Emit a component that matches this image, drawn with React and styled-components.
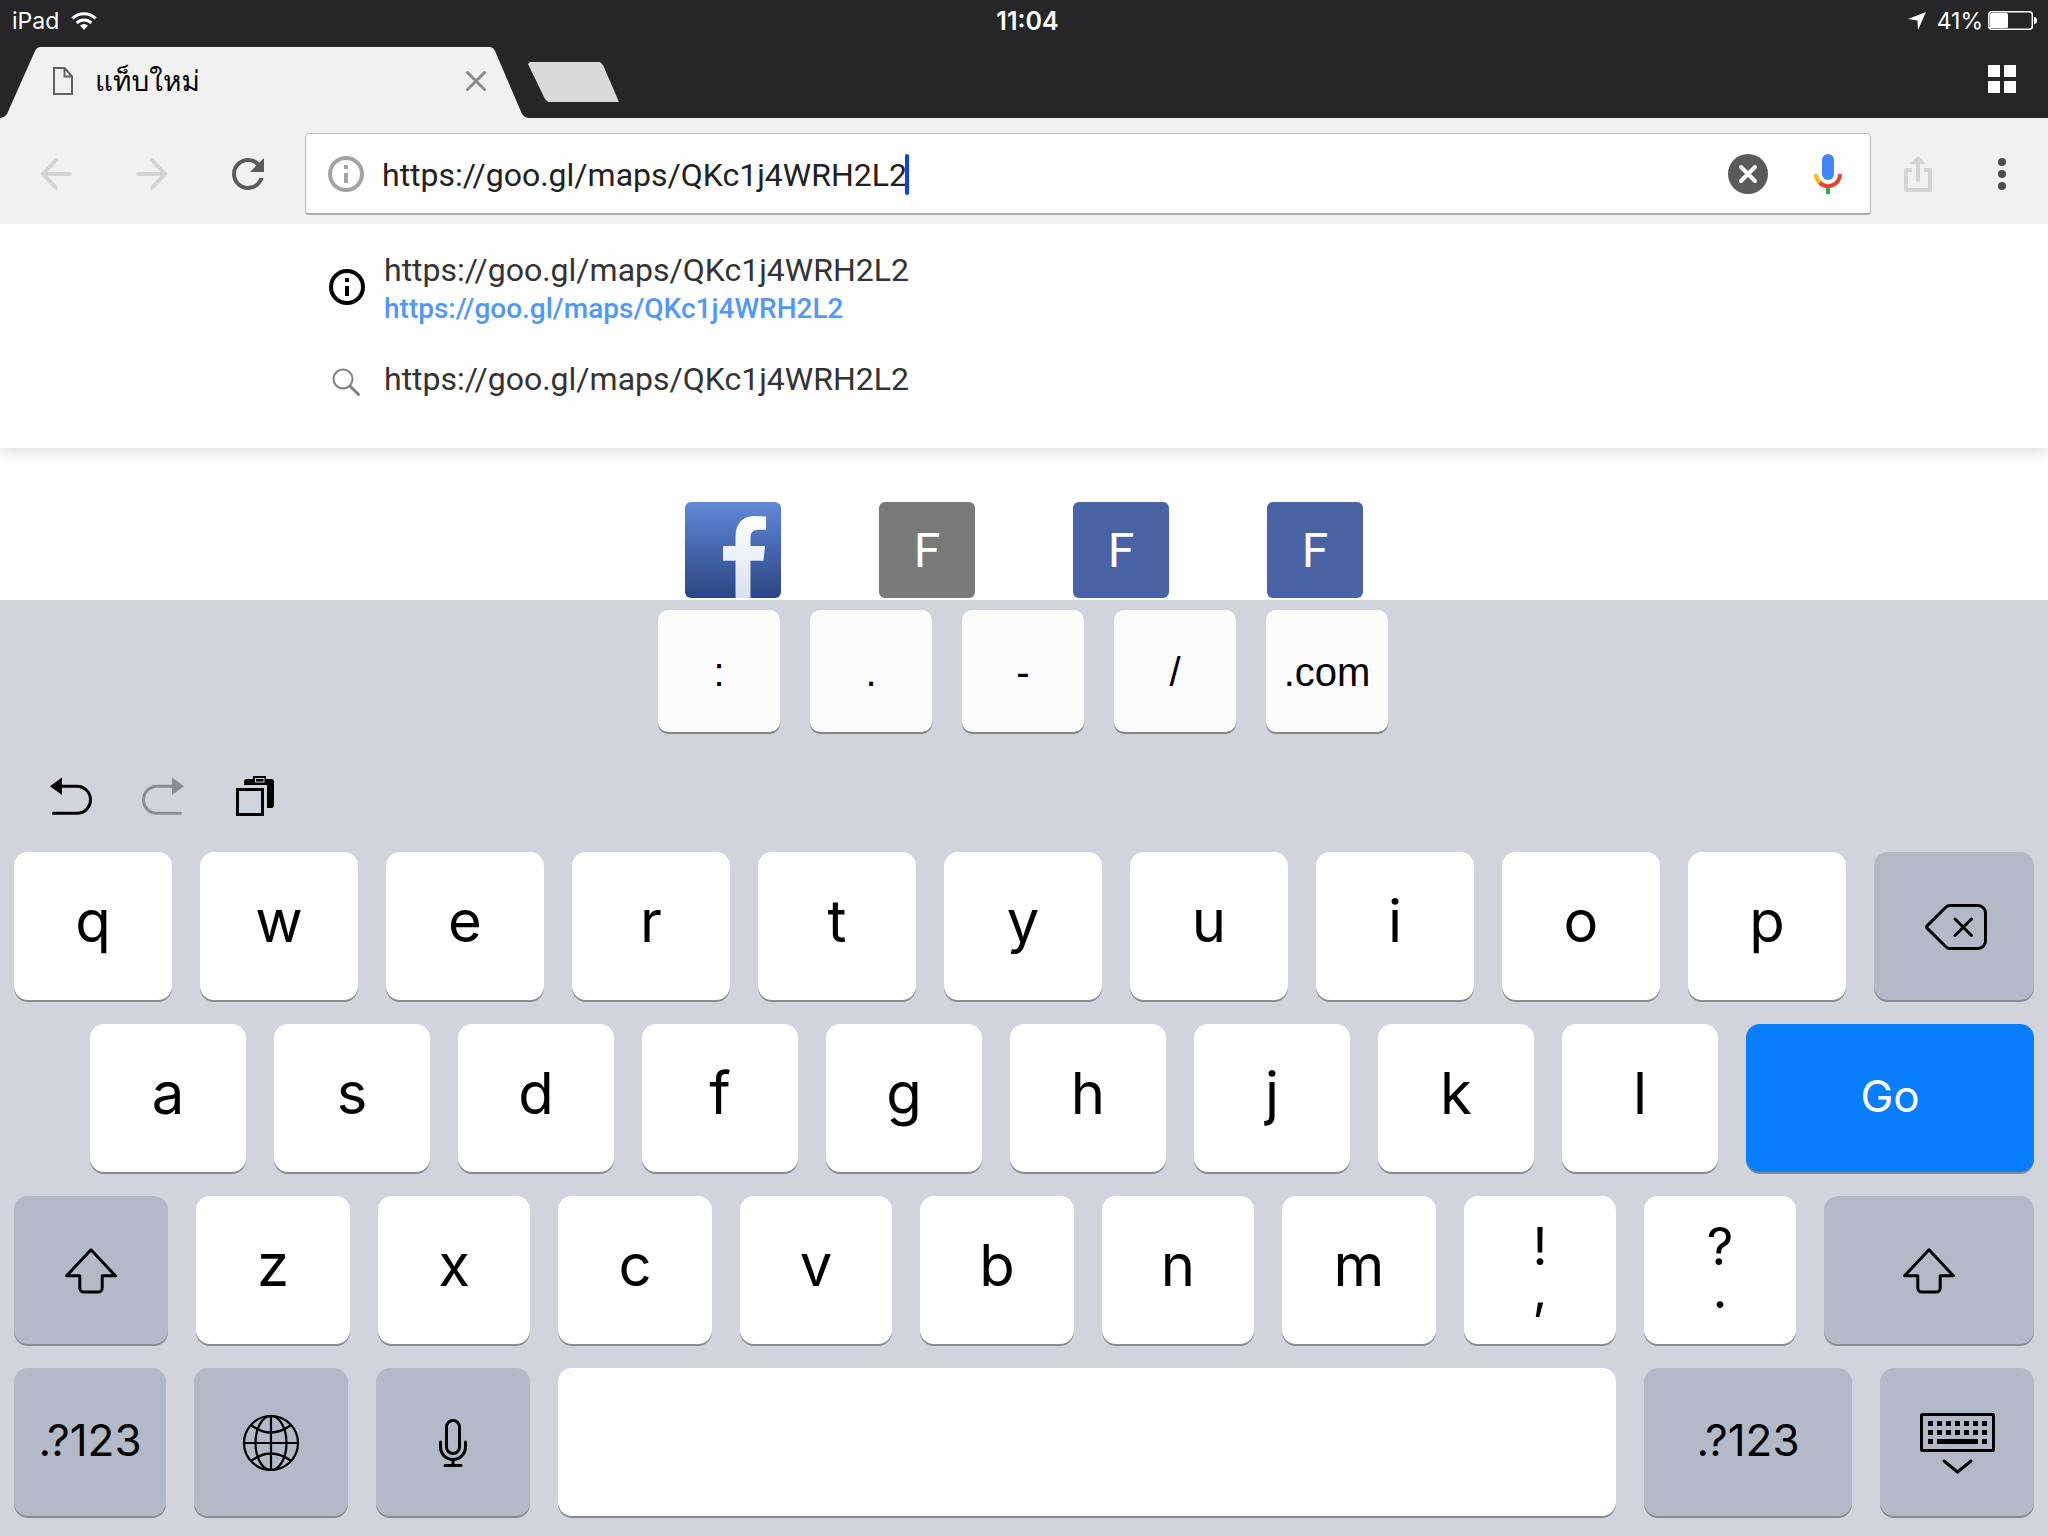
import React, { useState } from 'react';
import styled, { createGlobalStyle } from 'styled-components';

const url = 'https://goo.gl/maps/QKc1j4WRH2L2';

const GlobalStyle = createGlobalStyle`
  * { box-sizing: border-box; }
  body { margin: 0; background: #fff; font-family: Roboto, sans-serif; }
  button { border: 0; padding: 0; margin: 0; background: none; font: inherit; color: inherit; cursor: pointer; }
  svg { display: block; flex: none; }
`;

const Browser = styled.div`
  display: flex;
  flex-direction: column;
  min-height: 100vh;
`;

const TopBar = styled.header`
  background: #262628;
  color: #fff;
`;

const StatusBar = styled.div`
  display: grid;
  grid-template-columns: 1fr auto 1fr;
  align-items: center;
  height: 41px;
  padding: 0 11px 0 12px;
  font-family: Inter, 'Liberation Sans', sans-serif;
  font-size: 23px;
  line-height: 28px;
`;

const StatusGroup = styled.div`
  display: flex;
  align-items: center;
  justify-content: ${(props) => (props.$end ? 'flex-end' : 'flex-start')};
  gap: ${(props) => (props.$end ? '5px' : '12px')};
  svg:first-child { margin-right: 6px; }
`;

const Clock = styled.time`
  padding-left: 6px;
  font-size: 25px;
  font-weight: 600;
`;

const TabStrip = styled.div`
  display: flex;
  align-items: flex-end;
  height: 77px;
`;

const Tab = styled.div`
  display: flex;
  align-items: center;
  width: 528px;
  height: 71px;
  padding: 0 42px 4px 53px;
  background: #f1f1f1;
  color: #000;
  clip-path: polygon(0 100%, 4px 70px, 7px 67px, 35px 4px, 37px 1px, 40px 0, calc(100% - 38px) 0, calc(100% - 35px) 1px, calc(100% - 33px) 4px, calc(100% - 6px) 67px, calc(100% - 3px) 70px, 100% 100%);
`;

const TabTitle = styled.span`
  flex: 1;
  padding-left: 22px;
  font-family: Loma, 'Noto Sans Thai', 'Noto Sans', sans-serif;
  font-size: 28px;
  line-height: 40px;
`;

const NewTab = styled.button`
  width: 91px;
  height: 40px;
  margin-bottom: 16px;
  background: #dadada;
  clip-path: polygon(0 2px, 2px 0, 72px 0, 75px 3px, 100% 100%, 20px 100%, 17px 37px);
`;

const Switcher = styled.button`
  margin: 0 32px 25px auto;
`;

const Toolbar = styled.div`
  display: flex;
  align-items: center;
  height: 106px;
  padding: 15px 4px 9px 8px;
  background: #f1f1f1;
`;

const ToolButton = styled.button`
  display: flex;
  align-items: center;
  justify-content: center;
  width: ${(props) => props.$width || 96}px;
  height: 80px;
  color: ${(props) => (props.disabled ? '#d3d3d3' : '#555')};
`;

const Omnibox = styled.form`
  display: flex;
  flex: 1;
  align-items: center;
  height: 82px;
  margin: 0 5px 0 9px;
  padding: 0 2px 0 22px;
  background: #fff;
  border: 1px solid #bdbdbd;
  border-bottom: 2px solid #ababab;
  border-radius: 4px;
  color: #a3a3a3;
`;

const UrlField = styled.label`
  display: flex;
  flex: 1;
  align-items: center;
  padding: 2px 0 0 18px;
`;

const UrlInput = styled.input`
  field-sizing: content;
  border: 0;
  padding: 0;
  outline: 0;
  background: none;
  color: #212121;
  caret-color: transparent;
  font: 32px/40px Roboto, sans-serif;
`;

const Caret = styled.i`
  width: 4px;
  height: 41px;
  margin-left: -2px;
  border-radius: 2px;
  background: #0a46dc;
`;

const Suggestions = styled.ul`
  position: relative;
  display: flex;
  flex-direction: column;
  gap: 31px;
  margin: 0;
  padding: 27px 0 50px 329px;
  background: #fff;
  list-style: none;
  box-shadow: 0 1px 16px rgba(0, 0, 0, 0.2);
  clip-path: inset(0 0 -24px 0);
`;

const Suggestion = styled.a`
  display: flex;
  align-items: center;
  gap: 19px;
  color: #333;
  font-size: 32px;
  line-height: 38px;
  text-decoration: none;
`;

const SubLine = styled.div`
  color: #5297ff;
  font-size: 28px;
  font-weight: 500;
  line-height: 40px;
`;

const MostVisited = styled.main`
  display: flex;
  flex: 1;
  justify-content: center;
  gap: 98px;
  padding: 54px 0 2px;
`;

const Tile = styled.a`
  display: flex;
  align-items: center;
  justify-content: center;
  width: 96px;
  height: 96px;
  overflow: hidden;
  border-radius: 6px;
  background: ${(props) => props.$color};
  color: #fff;
  font-size: 48px;
  text-decoration: none;
`;

const Keyboard = styled.section`
  padding: 10px 14px 20px;
  background: #d1d4dc;
  color: #000;
  font-family: Inter, 'Liberation Sans', sans-serif;
`;

const Shortcuts = styled.div`
  display: flex;
  justify-content: center;
  gap: 30px;
  padding-right: 2px;
`;

const ShortcutKey = styled.button`
  width: 122px;
  height: 122px;
  padding-top: 2px;
  border-radius: 10px;
  background: #fcfcfc;
  box-shadow: 0 2px 0 #868686;
  font-family: 'Liberation Sans', Arial, sans-serif;
  font-size: 40px;
`;

const EditBar = styled.div`
  display: flex;
  height: 120px;
  padding: 7px 0 0 11px;
`;

const EditButton = styled.button`
  display: flex;
  align-items: center;
  justify-content: center;
  width: 92px;
  color: ${(props) => (props.disabled ? '#8a8d92' : '#000')};
`;

const Rows = styled.div`
  display: grid;
  gap: 24px;
`;

const Row = styled.div`
  display: grid;
  grid-template-columns: ${(props) => props.$columns};
  gap: 28px;
  padding-left: ${(props) => props.$indent || 0}px;
`;

const keyColors = { light: '#fefefe', dark: '#b3bac7', blue: '#087eff' };

const Key = styled.button`
  display: flex;
  align-items: center;
  justify-content: center;
  min-width: 0;
  height: 148px;
  padding-bottom: ${(props) => (props.$label ? 4 : 10)}px;
  border-radius: 14px;
  background: ${(props) => keyColors[props.$tone || 'light']};
  box-shadow: 0 2px 0 #888c91;
  color: ${(props) => (props.$tone === 'blue' ? '#fff' : '#000')};
  font-size: ${(props) => (props.$label ? 44 : 58)}px;
  font-weight: 400;
`;

const IconKey = styled(Key)`
  padding: 2px 0 0;
`;

const Marks = styled.span`
  padding-top: 6px;
  font-size: 52px;
  line-height: 43px;
  white-space: pre-line;
`;

const Icon = ({ w, h, children, sw = 3, color = 'currentColor' }) => (
  <svg width={w} height={h} viewBox={`0 0 ${w} ${h}`} fill="none" stroke={color} strokeWidth={sw} aria-hidden="true">
    {children}
  </svg>
);

const InfoIcon = ({ h = 36, color }) => (
  <Icon w={36} h={h} sw={4} color={color}>
    <circle cx="18" cy="18" r="16" />
    <path d="M18 9v4M18 17v10" />
  </Icon>
);

const ShiftIcon = () => (
  <Icon w={52} h={46}>
    <path d="M26 1.8L50.4 27.8H37.2V40a4 4 0 0 1-4 4H18.8a4 4 0 0 1-4-4V27.8H1.6Z" strokeLinejoin="round" />
  </Icon>
);

const FacebookLogo = () => (
  <svg width="96" height="96" viewBox="0 0 96 96" aria-hidden="true">
    <defs>
      <linearGradient id="fbBack" x1="0" y1="0" x2="0" y2="1">
        <stop offset="0" stopColor="#628ad8" />
        <stop offset="0.5" stopColor="#4566ae" />
        <stop offset="1" stopColor="#2b4582" />
      </linearGradient>
      <linearGradient id="fbMark" x1="0" y1="0" x2="0" y2="1">
        <stop offset="0" stopColor="#fff" />
        <stop offset="1" stopColor="#d7e0f0" />
      </linearGradient>
    </defs>
    <path fill="url(#fbBack)" d="M0 0H96V96H0z" />
    <path fill="url(#fbMark)" d="M50.5 96V58.7H38V44H50.5V35C50.5 21 58 14 70 14Q76 14 81 14.6V27.7H74C68 27.7 65.5 30 65.5 36V44H80L78.5 58.7H65.5V96Z" />
  </svg>
);

const cols = [0, 1, 2, 3, 4, 5, 6];

const App = () => {
  const [text, setText] = useState(url);
  const type = (char) => setText((value) => value + char);

  const letters = (chars) =>
    chars.split('').map((char) => (
      <Key key={char} type="button" onClick={() => type(char)}>{char}</Key>
    ));

  return (
    <Browser>
      <GlobalStyle />
      <TopBar>
        <StatusBar>
          <StatusGroup>
            <span>iPad</span>
            <Icon w={26} h={18}>
              <path d="M1.4 6.4A16.5 16.5 0 0 1 24.6 6.4M5.6 11A10.5 10.5 0 0 1 20.4 11" />
              <path d="M13 18L9 13.6a5.6 5.6 0 0 1 8 0z" fill="currentColor" stroke="none" />
            </Icon>
          </StatusGroup>
          <Clock>11:04</Clock>
          <StatusGroup $end>
            <Icon w={18} h={18}>
              <path d="M0 7L18 0L10 18L9.5 8.5z" fill="currentColor" stroke="none" />
            </Icon>
            <span>41%</span>
            <Icon w={49} h={19} sw={1.5}>
              <rect x="0.8" y="0.8" width="43.5" height="17.4" rx="3" />
              <rect x="2" y="2" width="18" height="15" rx="1.5" fill="currentColor" stroke="none" />
              <path d="M46 6c4 0 4 7 0 7z" fill="currentColor" stroke="none" />
            </Icon>
          </StatusGroup>
        </StatusBar>
        <TabStrip>
          <Tab>
            <Icon w={20} h={28} sw={2} color="#606060">
              <path d="M1 1H11.5L19 9.5V27H1ZM11.5 1V9.5H19" />
            </Icon>
            <TabTitle>แท็บใหม่</TabTitle>
            <button type="button" aria-label="Close tab">
              <Icon w={20} h={20} sw={3} color="#8a8a8a">
                <path d="M1.5 1.5L18.5 18.5M18.5 1.5L1.5 18.5" strokeLinecap="round" />
              </Icon>
            </button>
          </Tab>
          <NewTab type="button" aria-label="New tab" />
          <Switcher type="button" aria-label="Tab switcher">
            <Icon w={28} h={28}>
              <path d="M0 0H12V12H0zM16 0H28V12H16zM0 16H12V28H0zM16 16H28V28H16z" fill="currentColor" stroke="none" />
            </Icon>
          </Switcher>
        </TabStrip>
      </TopBar>

      <Toolbar>
        <ToolButton type="button" disabled aria-label="Back">
          <Icon w={32} h={32} sw={4}>
            <path d="M16 2L3 16L16 30M3 16H30" strokeLinecap="round" />
          </Icon>
        </ToolButton>
        <ToolButton type="button" disabled aria-label="Forward">
          <Icon w={32} h={32} sw={4}>
            <path d="M16 2L29 16L16 30M29 16H2" strokeLinecap="round" />
          </Icon>
        </ToolButton>
        <ToolButton type="button" aria-label="Reload">
          <svg width="32" height="32" viewBox="4 4 16 16" fill="#5a5a5a" aria-hidden="true">
            <path d="M17.65 6.35A7.958 7.958 0 0 0 12 4c-4.42 0-7.99 3.58-7.99 8s3.57 8 7.99 8c3.73 0 6.84-2.55 7.73-6h-2.08A5.99 5.99 0 0 1 12 18c-3.31 0-6-2.69-6-6s2.69-6 6-6c1.66 0 3.14.69 4.22 1.78L13 11h7V4l-2.35 2.35z" />
          </svg>
        </ToolButton>
        <Omnibox onSubmit={(e) => e.preventDefault()}>
          <InfoIcon />
          <UrlField>
            <UrlInput
              type="text"
              aria-label="Address"
              spellCheck={false}
              value={text}
              onChange={(e) => setText(e.target.value)}
            />
            <Caret />
          </UrlField>
          <ToolButton type="button" $width={80} aria-label="Clear" onClick={() => setText('')}>
            <Icon w={40} h={40} sw={4}>
              <circle cx="20" cy="20" r="20" fill="#5a5a5a" stroke="none" />
              <path d="M13 13L27 27M27 13L13 27" stroke="#fff" strokeLinecap="round" />
            </Icon>
          </ToolButton>
          <ToolButton type="button" $width={80} aria-label="Voice search">
            <Icon w={28} h={40} sw={4}>
              <rect x="8" width="12" height="26" rx="6" fill="#4285f4" stroke="none" />
              <path d="M2 20a12 12 0 0 0 3.5 8.5" stroke="#fbbc05" />
              <path d="M5.5 28.5A12 12 0 0 0 26 20" stroke="#ea4335" />
              <path d="M14 34v6" stroke="#34a853" />
            </Icon>
          </ToolButton>
        </Omnibox>
        <ToolButton type="button" $width={84} disabled aria-label="Share">
          <Icon w={28} h={36} sw={4}>
            <path d="M8 14H2V34H26V14H20" strokeLinejoin="round" />
            <path d="M14 6V24" strokeLinecap="round" />
            <path d="M6 8L14 0L22 8z" fill="currentColor" stroke="none" />
          </Icon>
        </ToolButton>
        <ToolButton type="button" $width={84} aria-label="Menu">
          <Icon w={8} h={32}>
            <g fill="#4c4c4c" stroke="none">
              <circle cx="4" cy="4" r="4" />
              <circle cx="4" cy="16" r="4" />
              <circle cx="4" cy="28" r="4" />
            </g>
          </Icon>
        </ToolButton>
      </Toolbar>

      <Suggestions>
        <li>
          <Suggestion href={url}>
            <InfoIcon h={42} color="#000" />
            <div>
              <div>{url}</div>
              <SubLine>{url}</SubLine>
            </div>
          </Suggestion>
        </li>
        <li>
          <Suggestion href={url}>
            <Icon w={36} h={36} sw={2} color="#808080">
              <circle cx="14" cy="18" r="9.5" />
              <path d="M21 25L29.5 33.5" strokeWidth="3" strokeLinecap="round" />
            </Icon>
            <div>{url}</div>
          </Suggestion>
        </li>
      </Suggestions>

      <MostVisited>
        <Tile href="#facebook" aria-label="Facebook"><FacebookLogo /></Tile>
        <Tile href="#site-2" $color="#797979">F</Tile>
        <Tile href="#site-3" $color="#4862a3">F</Tile>
        <Tile href="#site-4" $color="#4862a3">F</Tile>
      </MostVisited>

      <Keyboard>
        <Shortcuts>
          {[':', '.', '-', '/', '.com'].map((item) => (
            <ShortcutKey key={item} type="button" onClick={() => type(item)}>{item}</ShortcutKey>
          ))}
        </Shortcuts>
        <EditBar>
          <EditButton type="button" aria-label="Undo">
            <Icon w={42} h={38}>
              <path d="M11 9.3H27a13.5 13.5 0 0 1 0 27H3.5" strokeLinecap="round" />
              <path d="M0 9.3L12 0.5V18.1z" fill="currentColor" stroke="none" />
            </Icon>
          </EditButton>
          <EditButton type="button" disabled aria-label="Redo">
            <Icon w={42} h={38}>
              <path d="M31 9.3H15a13.5 13.5 0 0 0 0 27H38.5" strokeLinecap="round" />
              <path d="M42 9.3L30 0.5V18.1z" fill="currentColor" stroke="none" />
            </Icon>
          </EditButton>
          <EditButton type="button" aria-label="Paste">
            <Icon w={38} h={40}>
              <rect x="1.5" y="13.5" width="25" height="25" />
              <path d="M8 9V6a3 3 0 0 1 3-3H17V0H30V3H35a3 3 0 0 1 3 3V29a3 3 0 0 1-3 3H31V9z" fill="currentColor" stroke="none" />
              <rect x="19.5" y="2.5" width="8.5" height="3.5" stroke="#d1d4dc" strokeWidth="1" />
            </Icon>
          </EditButton>
        </EditBar>

        <Rows>
          <Row $columns="repeat(10, 158fr) 160fr">
            {letters('qwertyuiop')}
            <IconKey type="button" $tone="dark" aria-label="Backspace" onClick={() => setText((value) => value.slice(0, -1))}>
              <svg width="66" height="46" viewBox="-4 0 66 46" fill="none" stroke="#000" strokeWidth="3" aria-hidden="true">
                <path d="M25 1.5H53a7.5 7.5 0 0 1 7.5 7.5V37a7.5 7.5 0 0 1-7.5 7.5H25a6 6 0 0 1-4.2-1.8L2.3 24.4a2 2 0 0 1 0-2.8L20.8 3.3A6 6 0 0 1 25 1.5Z" />
                <path d="M30 15L46.5 31.5M46.5 15L30 31.5" strokeLinecap="round" />
              </svg>
            </IconKey>
          </Row>
          <Row $columns="repeat(9, 156fr) 288fr" $indent={76}>
            {letters('asdfghjkl')}
            <Key type="button" $tone="blue" $label>Go</Key>
          </Row>
          <Row $columns="154fr 154fr 152fr 154fr 152fr 154fr 152fr 154fr 152fr 152fr 210fr">
            <IconKey type="button" $tone="dark" aria-label="Shift"><ShiftIcon /></IconKey>
            {letters('zxcvbnm')}
            <Key type="button" onClick={() => type(',')}><Marks>{'!\n,'}</Marks></Key>
            <Key type="button" onClick={() => type('.')}><Marks>{'?\n.'}</Marks></Key>
            <IconKey type="button" $tone="dark" aria-label="Right shift"><ShiftIcon /></IconKey>
          </Row>
          <Row $columns="152fr 154fr 154fr 1058fr 208fr 154fr">
            <Key type="button" $tone="dark" $label>.?123</Key>
            <IconKey type="button" $tone="dark" aria-label="Next keyboard">
              <Icon w={58} h={58} sw={2.2}>
                <circle cx="29" cy="29" r="27" />
                <ellipse cx="29" cy="29" rx="15.5" ry="27" />
                <path d="M29 2V56M2 29H56M9 11Q29 26 49 11M9 47Q29 32 49 47" />
              </Icon>
            </IconKey>
            <IconKey type="button" $tone="dark" aria-label="Dictate">
              <Icon w={28} h={48}>
                <rect x="7.5" y="1.5" width="13" height="33" rx="6.5" />
                <path d="M1.5 23v5a12.5 12.5 0 0 0 25 0v-5M14 40.5V46M6 46.5H22" strokeLinecap="round" />
              </Icon>
            </IconKey>
            <Key type="button" aria-label="Space" onClick={() => type(' ')} />
            <Key type="button" $tone="dark" $label>.?123</Key>
            <IconKey type="button" $tone="dark" aria-label="Hide keyboard">
              <Icon w={75} h={62}>
                <rect x="1.5" y="2.5" width="72" height="36" rx="1" />
                <g fill="currentColor" stroke="none">
                  {cols.map((i) => <path key={i} d={`M${8 + i * 9} 9h5v5h-5zM${8 + i * 9} 18h5v5h-5z`} />)}
                  <path d="M8 27h5v5h-5zM17 27h41v5H17zM62 27h5v5h-5z" />
                </g>
                <path d="M24 49L37.5 60L51 49" strokeLinecap="round" />
              </Icon>
            </IconKey>
          </Row>
        </Rows>
      </Keyboard>
    </Browser>
  );
};

export default App;
